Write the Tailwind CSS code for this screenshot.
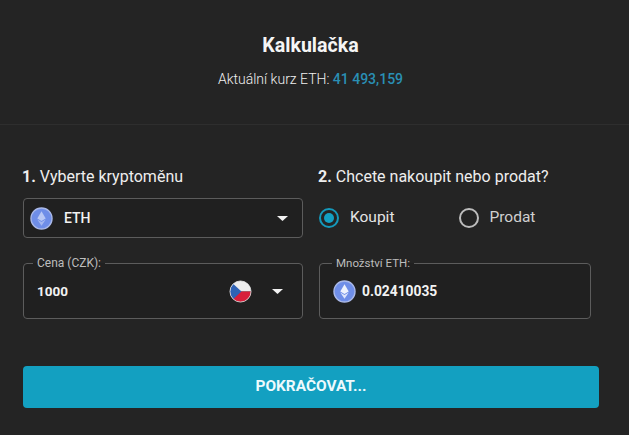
<!DOCTYPE html>
<html lang="cs">
<head>
<meta charset="utf-8">
<script src="https://cdn.jsdelivr.net/npm/@tailwindcss/browser@4"></script>
</head>
<body class="w-[629px] h-[435px] overflow-hidden bg-[#242424] text-white font-['Roboto',sans-serif]">
<header class="h-[125px] border-b border-[#2e2e2e] flex flex-col items-center pt-[34px] pr-[8px]">
  <h1 class="text-[19.6px] leading-[24px] font-bold text-[#f5f5f5]">Kalkulačka</h1>
  <p class="mt-[11px] text-[14px] leading-[20px] font-light text-[#f0f0f0]">Aktuální kurz ETH: <span class="font-medium text-[#2a8fb4]">41 493,159</span></p>
</header>
<main class="pl-[23px] pr-[30px] pt-[41px]">
  <div class="flex gap-[16px]">
    <section class="w-[280px]">
      <h2 class="ml-[-1px] text-[16px] leading-[22px] text-[#eeeeee]"><b class="font-bold">1.</b> Vyberte kryptoměnu</h2>
      <div class="mt-[10px] h-[40px] rounded-[4px] border border-[#5c5c5c] bg-[#202020] flex items-center pl-[6px] pr-[14px]">
        <svg class="w-[23px] h-[23px]" viewBox="0 0 24 24"><circle cx="12" cy="12" r="11" fill="#6f8ee8" stroke="#a9b8e8" stroke-width="1.4"/><path d="M12 4.5 7.6 12 12 14.6 16.4 12Z" fill="#b9c8f5"/><path d="M12 15.6 7.6 13 12 19.5 16.4 13Z" fill="#a5b8f0"/></svg>
        <span class="ml-[11px] text-[14px] font-medium text-[#f2f2f2]">ETH</span>
        <svg class="ml-auto w-[11px] h-[5px]" viewBox="0 0 11 5"><path d="M0 0H11L5.5 5Z" fill="#f2f2f2"/></svg>
      </div>
      <fieldset class="mt-[19px] h-[62px] rounded-[4px] border border-[#5c5c5c] bg-[#202020] flex items-center pl-[13px] pr-[19px] relative">
        <legend class="ml-[-4px] px-[4px] text-[12px] leading-[12px] text-[#bdbdbd]">Cena (CZK):</legend>
        <div class="w-full flex items-center mt-[-4px]">
          <span class="text-[13.5px] font-bold text-[#f2f2f2]">1000</span>
          <svg class="ml-auto w-[23px] h-[23px]" viewBox="0 0 24 24"><defs><clipPath id="c"><circle cx="12" cy="12" r="11"/></clipPath></defs><g clip-path="url(#c)"><rect width="24" height="12" fill="#ececec"/><rect y="12" width="24" height="12" fill="#d81e3a"/><path d="M0 0 13 12 0 24Z" fill="#2f62b5"/></g><circle cx="12" cy="12" r="11" fill="none" stroke="#f0f0f0" stroke-width=".8"/></svg>
          <svg class="ml-[20px] w-[11px] h-[5px]" viewBox="0 0 11 5"><path d="M0 0H11L5.5 5Z" fill="#f2f2f2"/></svg>
        </div>
      </fieldset>
    </section>
    <section class="w-[272px]">
      <h2 class="ml-[-1px] text-[16px] leading-[22px] text-[#eeeeee] whitespace-nowrap"><b class="font-bold">2.</b> Chcete nakoupit nebo prodat?</h2>
      <div class="mt-[10px] h-[40px] flex items-center">
        <span class="w-[20px] h-[20px] rounded-full border-2 border-[#1499bb] flex items-center justify-center"><span class="w-[10px] h-[10px] rounded-full bg-[#13a0c3]"></span></span>
        <span class="ml-[11px] text-[15.5px] text-[#e4e4e4]">Koupit</span>
        <span class="ml-[65px] w-[20px] h-[20px] rounded-full border-2 border-[#bdbdbd]"></span>
        <span class="ml-[10px] text-[15.5px] text-[#d0d0d0]">Prodat</span>
      </div>
      <fieldset class="mt-[19px] h-[62px] rounded-[4px] border border-[#5c5c5c] bg-[#202020] flex items-center pl-[13px] relative">
        <legend class="ml-[-1px] px-[4px] text-[11.5px] leading-[12px] text-[#bdbdbd]">Množství ETH:</legend>
        <div class="flex items-center mt-[-4px]">
          <svg class="w-[23px] h-[23px]" viewBox="0 0 24 24"><circle cx="12" cy="12" r="11" fill="#6f8ee8" stroke="#a9b8e8" stroke-width="1.4"/><path d="M12 4.5 7.6 12 12 14.6 16.4 12Z" fill="#eef2fd"/><path d="M12 15.6 7.6 13 12 19.5 16.4 13Z" fill="#dfe6fb"/></svg>
          <span class="ml-[6px] text-[13.8px] font-bold text-[#f2f2f2]">0.02410035</span>
        </div>
      </fieldset>
    </section>
  </div>
  <button class="mt-[47px] w-[576px] h-[42px] rounded-[4px] bg-[#13a0c1] text-[15.4px] font-bold text-[#eefafd]">POKRAČOVAT...</button>
</main>
</body>
</html>
